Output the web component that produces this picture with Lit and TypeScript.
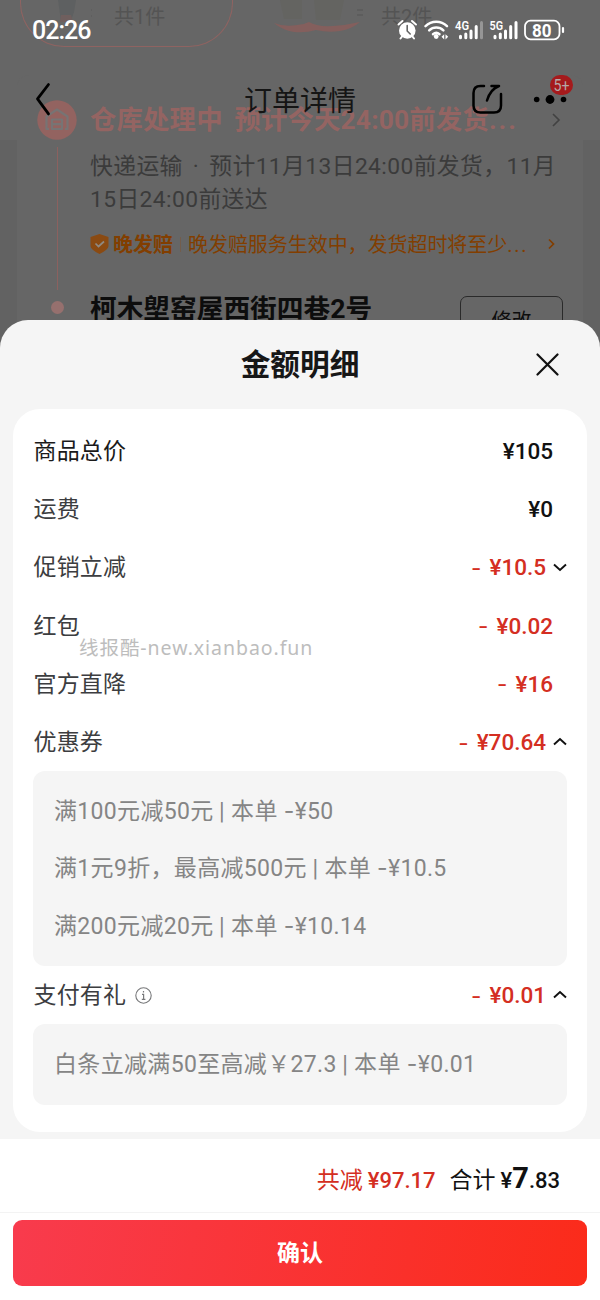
import { LitElement, html, css, nothing } from "lit";
import { customElement, property } from "lit/decorators.js";

interface Fee {
  label: string;
  amount: string;
  minus?: boolean;
  strong?: boolean;
  info?: boolean;
  open?: boolean;
  details?: { text: string; cut: string }[];
}

const FEES: Fee[] = [
  { label: "商品总价", amount: "¥105", strong: true },
  { label: "运费", amount: "¥0" },
  { label: "促销立减", amount: "¥10.5", minus: true, open: false },
  { label: "红包", amount: "¥0.02", minus: true },
  { label: "官方直降", amount: "¥16", minus: true },
  {
    label: "优惠券", amount: "¥70.64", minus: true, open: true,
    details: [
      { text: "满100元减50元", cut: "¥50" },
      { text: "满1元9折，最高减500元", cut: "¥10.5" },
      { text: "满200元减20元", cut: "¥10.14" },
    ],
  },
  {
    label: "支付有礼", amount: "¥0.01", minus: true, info: true, open: true,
    details: [{ text: "白条立减满50至高减￥27.3", cut: "¥0.01" }],
  },
];

@customElement("status-bar")
class StatusBar extends LitElement {
  static styles = css`
    :host { display: flex; justify-content: space-between; align-items: center; height: 60px; padding: 0 34px 0 32px; color: #fff; }
    .time { font-size: 25px; font-weight: 500; letter-spacing: -1px; line-height: 30px; padding-top: 2px; }
    .icons { display: block; }
    .net { font: 600 12px Roboto, sans-serif; fill: #fff; }
    .level { font: 700 18.500px Roboto, sans-serif; fill: #fff; }
  `;
  render() {
    return html`
      <span class="time">02:26</span>
      <svg class="icons" width="170" height="30" viewBox="397 15 170 30">
        <g fill="none" stroke="#fff" stroke-linecap="round">
          <circle cx="408.3" cy="30.5" r="8.3" fill="#fff" stroke="none" />
          <path d="M399.5 24.5l4-3.5M417 24.5l-4-3.5M403 36.5l-1.500 2M413.500 36.500l1.500 2" stroke-width="2" />
          <path d="M408.200 25.500v5.500l3 3" stroke="#666" stroke-width="1.600" />
          <path d="M426.500 26.200a15.500 15.500 0 0 1 21.500 0M430.200 30.300a10.300 10.300 0 0 1 14.200 0M434 34.200a5 5 0 0 1 6.500 0" stroke-width="2.500" />
          <circle cx="437.200" cy="36.500" r="2.400" fill="#fff" stroke="none" />
          <path d="M442.500 36.800l2.700-2.600v5.200zM449.200 36.800l-2.700-2.600v5.200z" fill="#fff" stroke="none" />
          <g stroke-width="3">
            <path d="M461.500 36.200v1.500M466.800 34v3.700M472 31v6.700M477.200 26.500v11.200" />
            <path d="M482.500 22.500v15.200" stroke="#969696" />
            <path d="M496 36.200v1.500M501.300 34v3.700M506.500 31v6.700M511.700 26.500v11.200M517 22.500v15.200" />
          </g>
          <rect x="526" y="20.700" width="34.500" height="18.600" rx="5.500" stroke-width="1.800" />
          <path d="M564 28v4" stroke-width="2.200" />
        </g>
        <text class="net" x="456" y="29.800" textLength="14" lengthAdjust="spacingAndGlyphs">4G</text>
        <text class="net" x="490.500" y="29.800" textLength="13.500" lengthAdjust="spacingAndGlyphs">5G</text>
        <text class="level" x="533" y="36.600" textLength="19.500" lengthAdjust="spacingAndGlyphs">80</text>
      </svg>`;
  }
}

@customElement("order-page")
class OrderPage extends LitElement {
  static styles = css`
    :host { display: block; height: 350px; overflow: hidden; background: #626262; }
    .veil { height: 140px; background: #666; margin-bottom: -140px; }
    .goods { display: flex; height: 47px; padding-left: 20px; gap: 32px; color: #545454; font-size: 20px; box-sizing: border-box; }
    .item { display: flex; width: 213px; height: 47px; box-sizing: border-box; line-height: 34px; gap: 22px; }
    .item.two { gap: 9px; }
    .item.on { border: 1.500px solid #8f6361; border-top: 0; border-radius: 0 0 44px 44px; }
    .pic { display: block; flex: none; }
    .card { display: flex; margin: 28px 17px 0; height: 275px; background: #666; border-radius: 12px 12px 0 0; }
    .rail { display: flex; flex-direction: column; align-items: center; width: 42px; padding: 25px 0 0 19px; flex: none; }
    .line { width: 1px; height: 143px; margin: 7px 0 11px; background: #8c615f; flex: none; }
    .dot { width: 13px; height: 13px; border-radius: 50%; background: #96706e; }
    .body { flex: 1; padding: 25px 20px 0 12px; min-width: 0; white-space: nowrap; }
    .state { display: flex; justify-content: space-between; align-items: center; height: 40px; font-size: 26.400px; font-weight: 700; color: #946462; }
    .state-text { letter-spacing: 0.150px; word-spacing: 5px; margin-top: -5px; }
    .dots { letter-spacing: 2px; }
    .ship { margin-top: 11px; font-size: 22.800px; line-height: 32.500px; color: #3b3b3b; letter-spacing: 0.400px; word-spacing: 4px; }
    .late { display: flex; align-items: center; margin-top: 16px; height: 24px; font-size: 20px; color: #823e00; }
    .late b { margin-top: -1px; }
    .shield { margin-right: 4px; }
    .sep { width: 1px; height: 15px; margin: 0 7px; background: #735d4c; }
    .late-text { flex: 1; letter-spacing: -0.050px; margin-top: -1px; }
    .late-dots { letter-spacing: 1.800px; }
    .addr { display: flex; justify-content: space-between; margin-top: 31px; color: #0d0d0d; }
    .addr-text { font-size: 26.700px; font-weight: 700; line-height: 40px; margin-top: 2px; }
    .edit { width: 101px; height: 42px; margin-top: 9px; border: 1.500px solid #2a2a2a; border-radius: 7px; text-align: center; font-size: 20px; line-height: 48px; }
  `;
  render() {
    return html`
      <div class="veil"></div>
      <div class="goods">
        <div class="item on">
          <svg class="pic" width="71" height="44" viewBox="21 0 71 44">
            <path d="M58 0h18l-2 12-3 9H61z" fill="#5e6061" /><path d="M61 15h10l2 7H60z" fill="#6f5f5e" /><path d="M91 10h5M91 16h5" stroke="#585858" />
          </svg>共1件
        </div>
        <div class="item two">
          <svg class="pic" width="107" height="44" viewBox="265 0 107 44">
            <path d="M280 0h22v19h-18zM314 0h30l-4 20h-24z" fill="#646461" />
            <path d="M274 23q10 4 23 2 6 0 12-3 8 5 24 4 14-1 27-4-8 7-20 9-12 2-24-1-10 3-22 2-12-2-20-9z" fill="#845f5d" />
            <path d="M357 10h6M357 15h6" stroke="#555" />
          </svg>共2件
        </div>
      </div>
      <div class="card">
        <div class="rail">
          <svg class="pic" width="40" height="40" viewBox="0 0 40 40">
            <circle cx="20" cy="20" r="19.700" fill="#936360" />
            <path d="M12 29H9.500V16.500L20 9.500l10.500 7V29H28M15 29v-9.500h10V29zM15 24.200h10" fill="none" stroke="#777474" stroke-width="2.200" stroke-linejoin="round" />
          </svg>
          <div class="line"></div>
          <div class="dot"></div>
        </div>
        <div class="body">
          <div class="state"><span class="state-text">仓库处理中 预计今天24:00前发货<span class="dots">...</span></span>
            <svg width="14" height="16" viewBox="0 0 14 16"><path d="M4 2l6 6-6 6" fill="none" stroke="#424242" stroke-width="1.600" /></svg>
          </div>
          <div class="ship">快递运输 · 预计11月13日24:00前发货，11月<br />15日24:00前送达</div>
          <div class="late">
            <svg class="shield" width="19" height="20" viewBox="0 0 19 20"><path d="M9.500 0l9 3v9q0 3.500-9 8-9-4.500-9-8V3z" fill="#8a4a12" /><path d="M5.500 9.500l3 3 5.500-5" fill="none" stroke="#8f8982" stroke-width="1.700" /></svg>
            <b>晚发赔</b><i class="sep"></i><span class="late-text">晚发赔服务生效中，发货超时将至少<span class="late-dots">...</span></span>
            <svg width="20" height="16" viewBox="0 0 20 16"><path d="M6 3.500l4.500 4.500L6 12.500" fill="none" stroke="#823e00" stroke-width="1.700" /></svg>
          </div>
          <div class="addr"><span class="addr-text">柯木塱窑屋西街四巷2号</span><div class="edit">修改</div></div>
        </div>
      </div>`;
  }
}

@customElement("nav-bar")
class NavBar extends LitElement {
  static styles = css`
    :host { display: grid; grid-template-columns: 1fr auto 1fr; align-items: center; height: 80px; padding: 0 26px 0 33px; color: #151515; }
    .title { font-size: 28px; line-height: 40px; margin-left: -7px; padding-top: 3px; }
    .tools { justify-self: end; }
    .count { font: 400 16px Roboto, sans-serif; fill: #b5a7a7; }
  `;
  render() {
    return html`
      <svg width="20" height="36" viewBox="33 82 20 36"><path d="M48.500 84.500L37.500 98.900l11 15" fill="none" stroke="#000" stroke-width="2.800" stroke-linecap="round" stroke-linejoin="round" /></svg>
      <span class="title">订单详情</span>
      <svg class="tools" width="106" height="60" viewBox="468 70 106 60">
        <g fill="none" stroke="#000" stroke-width="2.500" stroke-linecap="round" stroke-linejoin="round">
          <path d="M484 86h-3.500q-7 0-7 7v12.500q0 7 7 7h13.500q7 0 7-7V94" />
          <path d="M491.500 86h7.500q-8.500 3-12 14.500" />
        </g>
        <circle cx="536.700" cy="99.500" r="2.800" /><circle cx="550" cy="99.500" r="4.400" /><circle cx="563.500" cy="99.500" r="2.800" />
        <rect x="550" y="75" width="23" height="20" rx="10" fill="#a51a1c" />
        <text class="count" x="553.500" y="90.500" textLength="16" lengthAdjust="spacingAndGlyphs">5+</text>
      </svg>`;
  }
}

@customElement("fee-row")
class FeeRow extends LitElement {
  @property({ attribute: false }) fee!: Fee;
  static styles = css`
    :host { display: block; }
    .row { display: flex; align-items: center; height: 58.200px; color: #3c3d40; font-size: 23px; }
    .name { padding: 0 0 4px 0.500px; letter-spacing: 0.150px; }
    .strong { color: #1a1a1a; }
    .info { margin-left: 9px; }
    .amount { display: flex; align-items: center; margin-left: auto; margin-right: 14px; font-size: 22.500px; font-weight: 500; color: #111; }
    .minus { color: #d42e22; }
    .dash { font-family: Inter, sans-serif; font-weight: 400; margin-right: 8px; }
    .arrowed { margin-right: 7px; }
    .box { padding: 12px 21px 11px; background: #f5f5f5; border-radius: 12px; color: #858585; font-size: 23px; letter-spacing: 0.330px; }
    .detail { height: 57.300px; line-height: 57.300px; white-space: pre; }
    .thin { font-family: Inter, sans-serif; }
    .bar { margin: 0 6px 0 5.500px; }
  `;
  render() {
    const f = this.fee;
    const arrow = f.open ? "M1.500 9.500L7.500 4l6 5.500" : "M1.500 4.500L7.500 10l6-5.500";
    return html`
      <div class="row">
        <span class="name ${f.strong ? "strong" : ""}">${f.label}</span>
        ${f.info ? html`<svg class="info" width="17" height="17" viewBox="0 0 17 17"><circle cx="8.500" cy="8.500" r="7.700" fill="none" stroke="#77787a" stroke-width="1.100" /><path d="M8.500 4v1.600M7 7.300h1.600v5M6.800 12.400h3.600" fill="none" stroke="#77787a" stroke-width="1.200" /></svg>` : nothing}
        <span class="amount ${f.minus ? "minus" : ""} ${f.open !== undefined ? "arrowed" : ""}">${f.minus ? html`<span class="dash">-</span>` : nothing}${f.amount}</span>
        ${f.open !== undefined ? html`<svg width="14" height="14" viewBox="0.500 0 14 14"><path d=${arrow} fill="none" stroke="#111" stroke-width="1.900" /></svg>` : nothing}
      </div>
      ${f.details ? html`<div class="box">${f.details.map((d) => html`<div class="detail">${d.text}<span class="bar">|</span>本单 <span class="thin">-</span>${d.cut}</div>`)}</div>` : nothing}`;
  }
}

@customElement("app-root")
class AppRoot extends LitElement {
  static styles = css`
    :host { display: block; position: relative; width: 600px; height: 1300px; overflow: hidden; background: #626262; font-family: Roboto, "Noto Sans CJK SC", sans-serif; }
    .behind { position: absolute; inset: 0 0 auto 0; }
    .top { position: relative; height: 320px; }
    .sheet { position: relative; height: 980px; display: flex; flex-direction: column; background: #f5f5f5; border-radius: 28px 28px 0 0; overflow: hidden; }
    .head { display: grid; grid-template-columns: 1fr auto 1fr; align-items: center; height: 89px; padding: 0 41px; flex: none; }
    .title { grid-column: 2; font-size: 29.700px; font-weight: 700; color: #171717; padding-bottom: 4px; }
    .close { justify-self: end; }
    .card { height: 722.500px; margin: 0 13px; padding: 13px 20px 0; box-sizing: border-box; border-radius: 27px; background: #fff; flex: none; }
    .foot { margin-top: auto; height: 161px; background: #fff; }
    .sum { display: flex; justify-content: flex-end; align-items: baseline; height: 74px; line-height: 78px; padding-right: 40px; box-sizing: border-box; border-bottom: 1.500px solid #f3f3f3; font-size: 23px; color: #111; }
    .saved { color: #d42e22; margin-right: 14px; }
    .num { font-weight: 500; font-size: 22px; margin-left: 5px; }
    .big { font-size: 29px; font-weight: 700; }
    .btn { display: block; width: 574px; height: 66px; margin: 7px 13px 0; padding: 0 0 4px; border: 0; border-radius: 9px; background: linear-gradient(100deg, #f83b4d, #fb2b1a); color: #fff; font: 700 23px Roboto, "Noto Sans CJK SC", sans-serif; }
    .mark { position: absolute; left: 79px; top: 634px; font: 19.500px/28px "Noto Sans", "Noto Sans CJK SC", sans-serif; letter-spacing: 0.950px; color: #bdbdbd; white-space: nowrap; }
  `;
  render() {
    return html`
      <order-page class="behind"></order-page>
      <div class="top"><status-bar></status-bar><nav-bar></nav-bar></div>
      <section class="sheet">
        <div class="head">
          <span class="title">金额明细</span>
          <svg class="close" width="23" height="23" viewBox="0 0 23 23"><path d="M1.500 1.500l20 20M21.500 1.500l-20 20" stroke="#111" stroke-width="2.200" stroke-linecap="round" /></svg>
        </div>
        <div class="card">${FEES.map((f) => html`<fee-row .fee=${f}></fee-row>`)}</div>
        <div class="foot">
          <div class="sum">
            <span class="saved">共减<span class="num">¥97.17</span></span>
            <span>合计<span class="num">¥<span class="big">7</span>.83</span></span>
          </div>
          <button class="btn">确认</button>
        </div>
      </section>
      <div class="mark">线报酷-new.xianbao.fun</div>`;
  }
}
